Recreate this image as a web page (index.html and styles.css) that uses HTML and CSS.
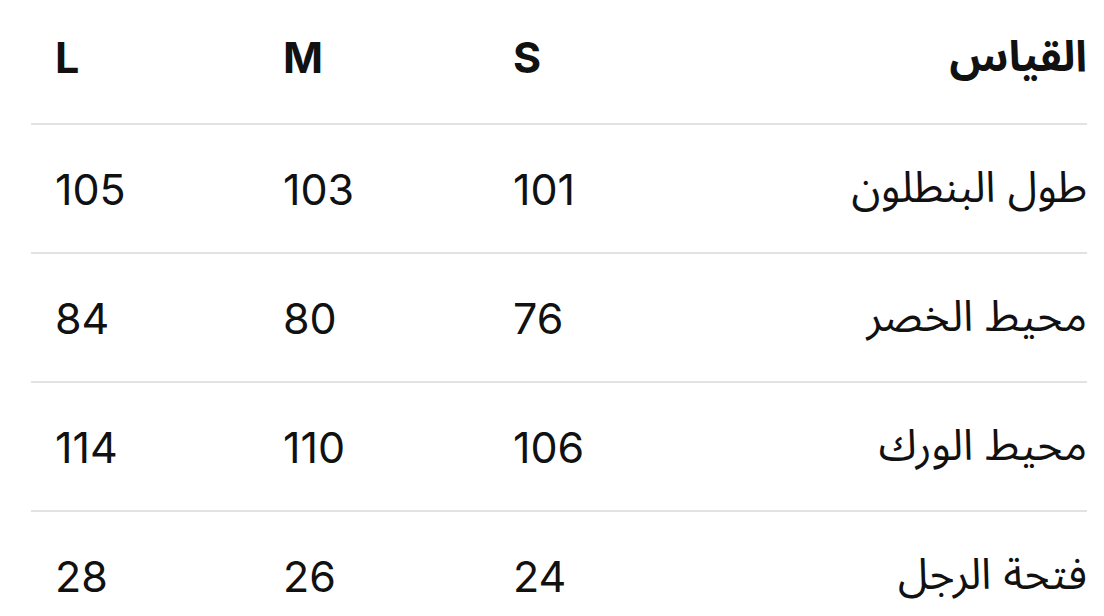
FILE: index.html
```html
<!DOCTYPE html>
<html lang="ar" dir="rtl">
<head>
<meta charset="utf-8">
<link rel="stylesheet" href="styles.css">
</head>
<body>
<div class="size-table">
  <div class="row head">
    <div class="cell label">القياس</div>
    <div class="cell num">S</div>
    <div class="cell num">M</div>
    <div class="cell num">L</div>
  </div>
  <div class="row">
    <div class="cell label">طول البنطلون</div>
    <div class="cell num">101</div>
    <div class="cell num">103</div>
    <div class="cell num">105</div>
  </div>
  <div class="row">
    <div class="cell label">محيط الخصر</div>
    <div class="cell num">76</div>
    <div class="cell num">80</div>
    <div class="cell num">84</div>
  </div>
  <div class="row">
    <div class="cell label">محيط الورك</div>
    <div class="cell num">106</div>
    <div class="cell num">110</div>
    <div class="cell num">114</div>
  </div>
  <div class="row last">
    <div class="cell label">فتحة الرجل</div>
    <div class="cell num">24</div>
    <div class="cell num">26</div>
    <div class="cell num">28</div>
  </div>
</div>
</body>
</html>
```
FILE: styles.css
```css
html, body {
  margin: 0;
  padding: 0;
  background: #ffffff;
}
body {
  font-family: "Inter", "Noto Sans Arabic", "DejaVu Sans", sans-serif;
  color: #111111;
  width: 1104px;
  height: 616px;
  overflow: hidden;
}
.size-table {
  margin-top: -4px;
  padding: 0 17px 0 31px;
}
.row {
  display: grid;
  grid-template-columns: 368px 230px 230px 1fr;
  height: 127px;
  border-bottom: 2px solid #e2e2e2;
  align-items: center;
  font-size: 43px;
}
.row.last {
  border-bottom: none;
}
.head {
  font-weight: 700;
  padding-bottom: 5px;
  height: 122px;
}
.cell.label {
  text-align: right;
}
.cell.num {
  direction: ltr;
  text-align: left;
  padding-left: 24px;
}
```
